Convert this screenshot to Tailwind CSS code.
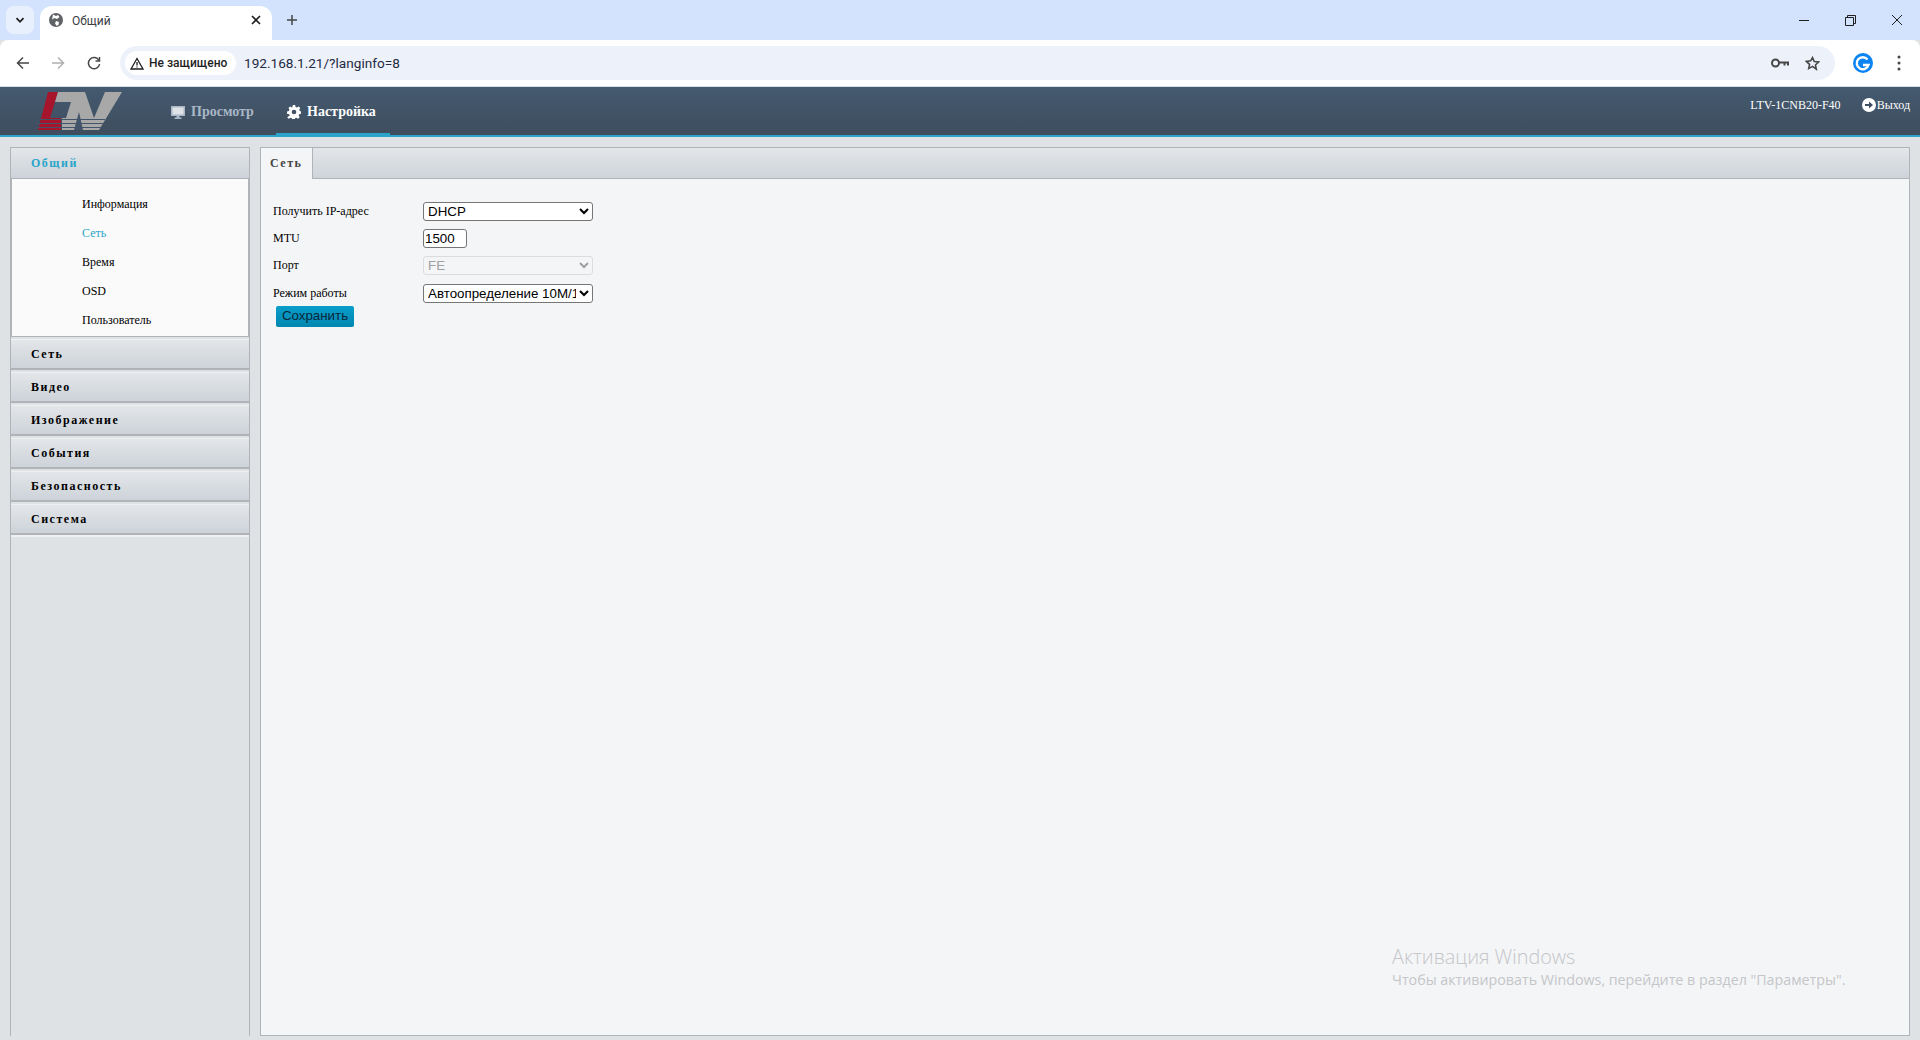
<!DOCTYPE html>
<html lang="ru">
  <head>
    <meta charset="UTF-8" />
    <title>Общий</title>
    <script src="https://cdn.jsdelivr.net/npm/@tailwindcss/browser@4"></script>
  </head>
  <body class="relative h-[1040px] w-[1920px] overflow-hidden bg-[#dfe2e5] font-['Liberation_Serif',serif] text-black">
    <!-- browser tab strip -->
    <div class="flex h-10 items-start bg-[#d3e3fd] font-['Roboto',sans-serif]">
      <div class="ml-[6px] mt-[6px] flex h-[28px] w-[28px] items-center justify-center rounded-lg bg-[#e9f0fd]">
        <svg width="12" height="12" viewBox="0 0 12 12" fill="none" stroke="#1f1f1f" stroke-width="1.8"><path d="M2.5 4.2 6 7.8l3.5-3.6" /></svg>
      </div>
      <div class="ml-[6px] mt-[6px] flex h-[34px] w-[232px] items-center rounded-t-xl bg-white pb-[6px] pl-[9px] pr-[11px]">
        <svg width="14" height="14" viewBox="0 0 14 14"><circle cx="7" cy="7" r="7" fill="#5f6368" /><path d="M4 1.5 7 3l2-1 1.5 2L8 6 5.5 5 3 6.5zM7 8l3 1-.5 3-2 .8L6 10.500z" fill="#fff" /></svg>
        <span class="ml-[9px] mt-[1px] flex-1 text-xs text-[#3c4043]">Общий</span>
        <svg width="10" height="10" viewBox="0 0 10 10" stroke="#1f1f1f" stroke-width="1.6"><path d="M1 1l8 8M9 1 1 9" /></svg>
      </div>
      <svg class="ml-[14px] mt-[14px]" width="12" height="12" viewBox="0 0 12 12" stroke="#444746" stroke-width="1.5"><path d="M6 1v10M1 6h10" /></svg>
      <div class="ml-auto flex h-10 items-center">
        <svg class="mr-[35px]" width="12" height="12" viewBox="0 0 12 12" stroke="#1f1f1f"><path d="M1 6.500h10" /></svg>
        <svg class="mr-[35px]" width="11" height="11" viewBox="0 0 11 11" fill="none" stroke="#1f1f1f"><path d="M.5 2.500h8v8h-8zM2.500 2.500v-2h8v8h-2" /></svg>
        <svg class="mr-[17px]" width="12" height="12" viewBox="0 0 12 12" stroke="#1f1f1f"><path d="M1 1l10 10M11 1 1 11" /></svg>
      </div>
    </div>

    <!-- browser toolbar -->
    <div class="flex h-[47px] items-center rounded-t-lg border-b border-[#d9dce0] bg-white font-['Roboto',sans-serif]">
      <svg class="ml-[16px]" width="14" height="14" viewBox="0 0 14 14" fill="none" stroke="#474747" stroke-width="1.5"><path d="M13 7H2M7 1.500 1.500 7 7 12.500" /></svg>
      <svg class="ml-[21px]" width="14" height="14" viewBox="0 0 14 14" fill="none" stroke="#b0b0b0" stroke-width="1.500"><path d="M1 7h11M7 1.500 12.500 7 7 12.500" /></svg>
      <svg class="ml-[22px]" width="14" height="14" viewBox="0 0 14 14" fill="none" stroke="#474747" stroke-width="1.500"><path d="M12 4.500A5.600 5.600 0 1 0 12.600 8" /><path d="M12.500 1v4h-4" /></svg>
      <div class="ml-[19px] flex h-[34px] w-[1715px] items-center rounded-full bg-[#edf2fa] pl-[5px]">
        <div class="flex h-6 w-[111px] items-center rounded-full bg-white pl-[5px] text-xs text-[#1f1f1f]">
          <svg width="14" height="13" viewBox="0 0 14 13" fill="none" stroke="#1f1f1f" stroke-width="1.300"><path d="M7 1.500 1 12h12z" /><path d="M7 5v3.500M7 9.500v1" /></svg>
          <span class="ml-[5px] font-medium whitespace-nowrap">Не защищено</span>
        </div>
        <span class="ml-[8px] text-[13.6px] text-[#1f2a44]">192.168.1.21/?langinfo=8</span>
        <svg class="ml-auto" width="18" height="10" viewBox="0 0 18 10" fill="none" stroke="#474747" stroke-width="2"><circle cx="4.500" cy="5" r="3.500" /><path d="M8 4.500h9v3M13.500 5v2.500" /></svg>
        <svg class="ml-[16px] mr-[15px]" width="15" height="15" viewBox="0 0 24 24" fill="none" stroke="#474747" stroke-width="2.500"><path d="m12 2.500 2.900 6.300 6.900.8-5.100 4.700 1.400 6.800L12 16.700l-6.100 3.400 1.400-6.800-5.100-4.700 6.900-.8z" /></svg>
      </div>
      <svg class="ml-[18px]" width="20" height="20" viewBox="0 0 20 20"><circle cx="10" cy="10" r="10" fill="#0b84f3" /><path d="M14.500 6.500A6 6 0 1 0 15.500 12H10" fill="none" stroke="#fff" stroke-width="2.400" /></svg>
      <svg class="ml-[24px]" width="4" height="16" viewBox="0 0 4 16" fill="#474747"><circle cx="2" cy="2" r="1.500" /><circle cx="2" cy="8" r="1.500" /><circle cx="2" cy="14" r="1.500" /></svg>
    </div>

    <!-- camera web ui header -->
    <header class="flex h-[50px] items-start border-b-2 border-[#2aa5c9] bg-gradient-to-b from-[#445a70] to-[#3f4d5e]">
      <svg class="ml-[37px] mt-[5px]" width="86" height="39" viewBox="0 0 86 39">
        <path d="M11 0h10l-8 26h11v12H1z" fill="#a6152c" />
        <path d="M21 0h27l9 26 11-26h17L62 38H25V26h4l5-16H18z" fill="#a8a8a8" />
        <path d="M37 38l5-18 4 18z" fill="#42546a" />
        <path d="M0 27.500h68M0 31.500h66M0 35.500h64" stroke="#42546a" stroke-width="1" />
      </svg>
      <nav class="ml-[48px] flex h-[50px]">
        <a class="flex h-[50px] w-[103px] items-center text-sm font-bold text-[#a9b7c6]">
          <svg class="mr-[6px]" width="14" height="14" viewBox="0 0 14 14"><path d="M0 1h14v10H8.500v1.500h2V14h-7v-1.500h2V11H0z" fill="#a9b7c6" /><path d="M1.500 2.500h11v7h-11z" fill="#dfe3e8" /></svg>
          Просмотр
        </a>
        <a class="ml-[2px] flex h-[50px] w-[114px] items-center border-b-4 border-[#2aa5c9] pl-[11px] pt-[4px] text-sm font-bold text-white">
          <svg class="mr-[6px]" width="14" height="14" viewBox="0 0 24 24" fill="#fff"><path fill-rule="evenodd" d="M10 0h4l.7 3.300 2.300 1 2.900-1.800 2.800 2.800L21 8l1 2.300 2 .7v4l-3 .7-1 2.300 1.700 2.900-2.800 2.800-2.900-1.800-2.300 1-.7 3.100h-4l-.7-3.100-2.300-1-2.900 1.800-2.800-2.800L4.700 18l-1-2.300L0 15v-4l3.300-.7 1-2.300L2.500 5.300l2.800-2.800L8.200 4.300l1.100-1zM12 8a4 4 0 1 0 0 8 4 4 0 0 0 0-8z" /></svg>
          Настройка
        </a>
      </nav>
      <div class="ml-auto mr-[10px] flex h-9 items-center text-xs text-white">
        <span>LTV-1CNB20-F40</span>
        <svg class="ml-[21px]" width="14" height="14" viewBox="0 0 14 14"><circle cx="7" cy="7" r="7" fill="#fff" /><path d="M3 6h4V3.500L11 7l-4 3.500V8H3z" fill="#3f4f62" /></svg>
        <span class="ml-[1px]">Выход</span>
      </div>
    </header>

    <div class="flex h-[901px] gap-[10px] pl-[10px] pr-[10px] pt-[10px] pb-[2px]">
      <!-- settings menu -->
      <aside class="flex w-[240px] flex-col border border-[#b0b4b8] border-b-0 text-xs font-bold tracking-[1.5px]">
        <div class="flex h-[31px] items-center border-b border-[#b0b4b8] bg-gradient-to-b from-[#e3e6e9] to-[#cdd3d9] pl-[20px] text-[#2aa5c9]">Общий</div>
        <ul class="h-[158px] border-x border-b border-[#b0b4b8] bg-[#fafafa] pt-[10px] pl-[70px] font-normal tracking-normal">
          <li class="flex h-[29px] items-center">Информация</li>
          <li class="flex h-[29px] items-center text-[#2aa5c9]">Сеть</li>
          <li class="flex h-[29px] items-center">Время</li>
          <li class="flex h-[29px] items-center">OSD</li>
          <li class="flex h-[29px] items-center">Пользователь</li>
        </ul>
        <div class="mt-[2px] flex h-[31px] items-center border-t border-b-2 border-t-[#eef0f2] border-b-[#b0b4b8] bg-gradient-to-b from-[#e3e6e9] to-[#cdd3d9] pl-[20px]">Сеть</div>
        <div class="mt-[2px] flex h-[31px] items-center border-t border-b-2 border-t-[#eef0f2] border-b-[#b0b4b8] bg-gradient-to-b from-[#e3e6e9] to-[#cdd3d9] pl-[20px]">Видео</div>
        <div class="mt-[2px] flex h-[31px] items-center border-t border-b-2 border-t-[#eef0f2] border-b-[#b0b4b8] bg-gradient-to-b from-[#e3e6e9] to-[#cdd3d9] pl-[20px]">Изображение</div>
        <div class="mt-[2px] flex h-[31px] items-center border-t border-b-2 border-t-[#eef0f2] border-b-[#b0b4b8] bg-gradient-to-b from-[#e3e6e9] to-[#cdd3d9] pl-[20px]">События</div>
        <div class="mt-[2px] flex h-[31px] items-center border-t border-b-2 border-t-[#eef0f2] border-b-[#b0b4b8] bg-gradient-to-b from-[#e3e6e9] to-[#cdd3d9] pl-[20px]">Безопасность</div>
        <div class="mt-[2px] flex h-[31px] items-center border-t border-b-2 border-t-[#eef0f2] border-b-[#b0b4b8] bg-gradient-to-b from-[#e3e6e9] to-[#cdd3d9] pl-[20px]">Система</div>
        <div class="h-[2px] bg-[#eef0f2]"></div>
      </aside>

      <!-- network form -->
      <main class="flex flex-1 flex-col border border-[#b0b4b8] bg-[#f4f5f7]">
        <div class="flex h-[31px] bg-gradient-to-b from-[#e3e6e9] to-[#cdd3d9]">
          <div class="flex h-[31px] w-[52px] items-center border-r border-[#b0b4b8] bg-[#f4f5f7] pb-[2px] pl-[9px] text-xs font-bold tracking-[1.5px] text-[#444]">Сеть</div>
          <div class="h-[31px] flex-1 border-b border-[#b0b4b8]"></div>
        </div>
        <form class="pl-3 pt-[23px] text-xs">
          <div class="flex h-[27px] items-start"><label class="w-[150px] pt-[1px]">Получить IP-адрес</label>
            <select class="h-[19px] w-[170px] rounded-[3px] border border-[#767676] bg-white pb-[1px] font-['Liberation_Sans',sans-serif] text-[13.333px]"><option>DHCP</option></select>
          </div>
          <div class="flex h-[27px] items-start"><label class="w-[150px] pt-[1px]">MTU</label>
            <input type="text" value="1500" class="h-[19px] w-[44px] rounded-[3px] border border-[#767676] bg-white pb-[1px] pl-[1px] font-['Liberation_Sans',sans-serif] text-[13.333px]" />
          </div>
          <div class="flex h-[28px] items-start"><label class="w-[150px] pt-[1px]">Порт</label>
            <select disabled class="h-[19px] w-[170px] rounded-[3px] border border-[#dcdcdc] bg-[#f4f5f7] pb-[1px] font-['Liberation_Sans',sans-serif] text-[13.333px] text-[#a0a0a0]"><option>FE</option></select>
          </div>
          <div class="flex h-[22px] items-start"><label class="w-[150px] pt-[1px]">Режим работы</label>
            <select class="h-[19px] w-[170px] rounded-[3px] border border-[#767676] bg-white pb-[1px] font-['Liberation_Sans',sans-serif] text-[13.333px]"><option>Автоопределение 10M/100M</option></select>
          </div>
          <button type="button" class="ml-[3px] h-[21px] w-[78px] rounded-[2px] bg-gradient-to-b from-[#0a9ecb] to-[#0086b0] pb-[1px] font-['Liberation_Sans',sans-serif] text-[13.333px] text-[#06283a]">Сохранить</button>
        </form>
      </main>
    </div>

    <!-- windows activation watermark -->
    <div class="absolute left-[1392px] top-[944px] font-['Open_Sans',sans-serif] text-[#c4c6c9]">
      <div class="text-[19.8px] leading-[26px] font-light">Активация Windows</div>
      <div class="text-[14.25px] leading-[20px]">Чтобы активировать Windows, перейдите в раздел "Параметры".</div>
    </div>
  </body>
</html>
